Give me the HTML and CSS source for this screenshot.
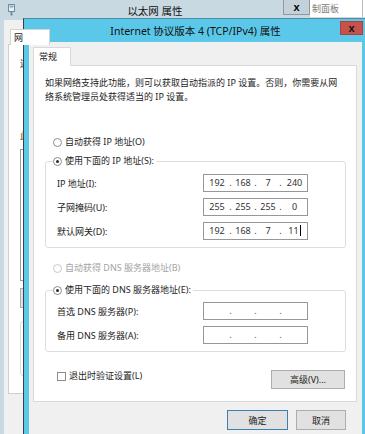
FILE: index.html
```html
<!DOCTYPE html>
<html lang="zh-CN">
<head>
<meta charset="utf-8">
<title>Internet 协议版本 4 (TCP/IPv4) 属性</title>
<link rel="stylesheet" href="styles.css">
</head>
<body>
<div class="desk">
  <div class="bgwin">
    <div class="bg-title">
      <svg class="bg-icon" width="7" height="12" viewBox="0 0 7 12">
        <rect x="0.5" y="0.5" width="6" height="7" fill="#e8eef2" stroke="#6f8ea6"/>
        <rect x="1.5" y="1.5" width="4" height="2" fill="#8fa9bc"/>
        <rect x="2.5" y="7.5" width="2" height="4" fill="#6f8ea6"/>
      </svg>
      <span class="bg-title-text">以太网 属性</span>
      <span class="bg-close">x</span>
    </div>
    <div class="bg-body">
      <div class="bg-tab">网</div>
      <div class="bg-panel">
        <div class="bg-line1">连</div>
        <div class="bg-line2">此</div>
        <div class="bg-list"></div>
        <div class="bg-btn"></div>
        <div class="bg-desc"></div>
      </div>
    </div>
  </div>
  <div class="cp">制面板</div>

  <div class="dlg">
    <div class="dlg-title">
      <span>Internet 协议版本 4 (TCP/IPv4) 属性</span>
      <span class="dlg-close">x</span>
    </div>
    <div class="dlg-body">
      <div class="tabs"><div class="tab">常规</div></div>
      <div class="panel">
        <p class="desc">如果网络支持此功能，则可以获取自动指派的 IP 设置。否则，你需要从网<br>络系统管理员处获得适当的 IP 设置。</p>

        <div class="opt first"><span class="radio"></span><span>自动获得 IP 地址(O)</span></div>

        <fieldset class="group">
          <legend class="opt"><span class="radio on"></span><span>使用下面的 IP 地址(S):</span></legend>
          <div class="rows">
            <span>IP 地址(I):</span>
            <div class="ip"><span>192</span><span>.</span><span>168</span><span>.</span><span>7</span><span>.</span><span>240</span></div>
            <span>子网掩码(U):</span>
            <div class="ip"><span>255</span><span>.</span><span>255</span><span>.</span><span>255</span><span>.</span><span>0</span></div>
            <span>默认网关(D):</span>
            <div class="ip"><span>192</span><span>.</span><span>168</span><span>.</span><span>7</span><span>.</span><span>11<i class="caret"></i></span></div>
          </div>
        </fieldset>

        <div class="opt disabled"><span class="radio"></span><span>自动获得 DNS 服务器地址(B)</span></div>

        <fieldset class="group dns">
          <legend class="opt"><span class="radio on"></span><span>使用下面的 DNS 服务器地址(E):</span></legend>
          <div class="rows">
            <span>首选 DNS 服务器(P):</span>
            <div class="ip empty"><span></span><span>.</span><span></span><span>.</span><span></span><span>.</span><span></span></div>
            <span>备用 DNS 服务器(A):</span>
            <div class="ip empty"><span></span><span>.</span><span></span><span>.</span><span></span><span>.</span><span></span></div>
          </div>
        </fieldset>

        <div class="foot">
          <label class="check"><span class="box"></span><span>退出时验证设置(L)</span></label>
          <span class="btn adv">高级(V)...</span>
        </div>
      </div>
      <div class="actions">
        <span class="btn ok">确定</span>
        <span class="btn cancel">取消</span>
      </div>
    </div>
  </div>
</div>
</body>
</html>
```
FILE: styles.css
```css
* { box-sizing: border-box; }
html, body { margin: 0; padding: 0; }
body {
  width: 365px;
  height: 434px;
  overflow: hidden;
  background: #c9d9e1;
  font-family: "Noto Sans", "Noto Sans CJK SC", sans-serif;
  font-size: 9px;
  color: #1c1c1c;
}
.desk { position: relative; width: 365px; height: 434px; overflow: hidden; }

/* background window */
.bgwin {
  position: absolute; left: 0; top: 0;
  width: 310px; height: 434px;
  background: #c9d9e1;
  display: flex; flex-direction: column;
}
.bg-title {
  position: relative;
  height: 20px;
  display: flex; justify-content: center; align-items: flex-start;
  padding-top: 4px;
  font-size: 10.5px; line-height: 15px; color: #111;
}
.bg-icon { position: absolute; left: 8px; top: 4px; }
.bg-close {
  position: absolute; right: 0; top: 0;
  width: 27px; height: 15px;
  background: #c4d1d8;
  border: 1px solid #8b9aa2; border-top: none;
  display: flex; align-items: center; justify-content: center;
  font: bold 11px/1 "Liberation Sans", sans-serif; color: #000;
}
.bg-body {
  flex: 1;
  margin: 0 4px 0 4px;
  background: #f0f0f0;
  padding: 9px 0 0 4px;
  display: flex; flex-direction: column;
}
.bg-tab {
  align-self: flex-start;
  margin-left: 2px;
  width: 40px; height: 16px;
  background: #fff;
  border: 1px solid #d4d4d4; border-bottom: none;
  padding: 2px 0 0 3px;
  font-size: 9px; line-height: 12px;
  position: relative; z-index: 1; margin-bottom: -1px;
}
.bg-panel {
  width: 296px;
  height: 350px;
  background: #fff;
  border: 1px solid #cfcfcf;
  padding: 12px 0 0 11px;
  display: flex; flex-direction: column;
}
.bg-line1 { line-height: 14px; }
.bg-line2 { line-height: 14px; margin-top: 58px; color: #6a4a2a; }
.bg-list { margin-top: 6px; height: 132px; width: 270px; border: 1px solid #9a9a9a; }
.bg-btn {
  margin-top: 7px; height: 20px; width: 60px;
  background: #e1e1e1; border: 1px solid #adadad;
}
.bg-desc { margin-top: 13px; height: 55px; width: 270px; border: 1px solid #dcdcdc; border-radius: 3px; }

.cp {
  position: absolute; left: 310px; top: 0;
  width: 55px; height: 18px;
  background: #fff;
  border-bottom: 1px solid #d8d8d8;
  padding: 3px 0 0 2px;
  color: #7a7a7a; line-height: 12px;
}
.cp::after {
  content: ""; position: absolute; right: 2px; top: 0; bottom: 0;
  border-right: 1px solid #bdbdbd;
}

/* foreground dialog */
.dlg {
  position: absolute; left: 23px; top: 18px;
  width: 342px; height: 416px;
  background: #5bc8e9;
  border-left: 1px solid #34434a;
  border-top: 1px solid #4b8ea5;
  padding: 0 3px 0 5px;
  display: flex; flex-direction: column;
}
.dlg-title {
  position: relative;
  height: 23px;
  display: flex; align-items: center; justify-content: center;
  font-size: 10.5px; color: #111;
}
.dlg-close {
  position: absolute; right: -1px; top: 2px;
  width: 23px; height: 14px;
  background: #c6524b;
  border: 1px solid #a8433d;
  display: flex; align-items: center; justify-content: center;
  font: bold 11px/1 "Liberation Sans", sans-serif; color: #111;
}
.dlg-body {
  flex: 1;
  background: #f0f0f0;
  padding: 5px 5px 0 4px;
}
.tabs { display: flex; }
.tab {
  width: 38px; height: 19px;
  background: #fff;
  border: 1px solid #d9d9d9; border-bottom: none;
  padding: 3px 0 0 5px;
  line-height: 12px;
  position: relative; z-index: 1;
  margin-bottom: -1px;
}
.panel {
  background: #fff;
  border: 1px solid #d9d9d9;
  padding: 10px 0 12px 0;
}
.desc { margin: 0 0 0 11px; line-height: 14px; }

.opt {
  display: flex; align-items: center;
  height: 14px; line-height: 14px;
  white-space: nowrap;
}
.opt.first { margin: 31px 0 0 19px; }
.opt.disabled { margin: 13px 0 0 19px; color: #a3a3a3; }
.radio {
  width: 9px; height: 9px;
  border: 1px solid #8c8c8c;
  border-radius: 50%;
  background: #fff;
  margin-right: 3px;
  display: flex; align-items: center; justify-content: center;
  flex: none;
}
.radio.on::after {
  content: ""; width: 3px; height: 3px; border-radius: 50%; background: #2a2a2a;
}
.disabled .radio { border-color: #c8c8c8; }

.group {
  margin: 5px 10px 0 11px;
  padding: 6px 0 7px 0;
  border: 1px solid #dedede;
  border-radius: 3px;
  min-width: 0;
}
.group.dns { margin-top: 8px; padding-top: 5px; }
.group legend {
  margin-left: 7px;
  padding: 0 2px 0 0;
  background: #fff;
}
.rows {
  display: grid;
  grid-template-columns: 146px 105px;
  row-gap: 6px;
  align-items: center;
  padding-left: 11px;
}
.ip {
  height: 18px;
  border: 1px solid #979797;
  background: #fff;
  padding-left: 1px;
  display: grid;
  grid-template-columns: 24px 3px 22px 3px 22px 3px 25px;
  align-items: center;
  text-align: center;
  color: #333;
  line-height: 14px;
}
.ip span { display: block; }
.ip.empty span { color: #556; }
.caret {
  display: inline-block; width: 0; height: 11px;
  border-left: 1px solid #000;
  vertical-align: -2px; margin-left: 1px;
}

.foot {
  margin-top: 18px;
  display: flex; justify-content: space-between; align-items: flex-start;
  padding: 0 11px 0 23px;
}
.check { display: flex; align-items: center; line-height: 12px; margin-top: 0; }
.box {
  width: 9px; height: 9px;
  border: 1px solid #8c8c8c; background: #fff;
  margin-right: 3px;
}
.btn {
  height: 19px;
  display: flex; align-items: center; justify-content: center;
  background: #e1e1e1;
  border: 1px solid #adadad;
  color: #1c1c1c;
}
.adv { width: 74px; }
.actions {
  margin-top: 8px;
  display: flex; justify-content: flex-end; gap: 8px;
  padding-right: 11px;
}
.actions .btn { height: 20px; }
.ok { width: 61px; border-color: #3c7fb1; }
.cancel { width: 50px; }
```
